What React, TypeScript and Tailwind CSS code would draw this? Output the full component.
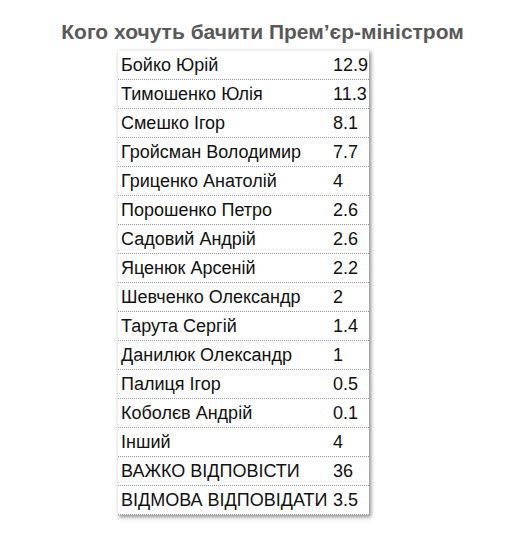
import React from "react";

const rows: [string, string][] = [
  ["Бойко Юрій", "12.9"],
  ["Тимошенко Юлія", "11.3"],
  ["Смешко Ігор", "8.1"],
  ["Гройсман Володимир", "7.7"],
  ["Гриценко Анатолій", "4"],
  ["Порошенко Петро", "2.6"],
  ["Садовий Андрій", "2.6"],
  ["Яценюк Арсеній", "2.2"],
  ["Шевченко Олександр", "2"],
  ["Тарута Сергій", "1.4"],
  ["Данилюк Олександр", "1"],
  ["Палиця Ігор", "0.5"],
  ["Коболєв Андрій", "0.1"],
  ["Інший", "4"],
  ["ВАЖКО ВІДПОВІСТИ", "36"],
  ["ВІДМОВА ВІДПОВІДАТИ", "3.5"],
];

export default function App() {
  return (
    <div className="w-[525px] h-[542px] bg-white" style={{ fontFamily: '"Liberation Sans", Arial, sans-serif' }}>
      <div className="pt-[19px] text-center text-[21px] font-bold text-[#595959] leading-[26px]">
        Кого хочуть бачити Прем’єр-міністром
      </div>
      <div className="pt-[5px]">
        <div className="ml-[117px] w-[252px] bg-white shadow-[2px_2px_4px_rgba(0,0,0,0.45)] border-t border-l border-[#eee]">
          {rows.map(([n, v]) => (
            <div key={n} className="flex h-[29px] items-center border-b border-dotted border-[#999] text-[18px] text-[#111]">
              <div className="w-[215px] pl-[3px] whitespace-nowrap">{n}</div>
              <div className="flex-1 whitespace-nowrap">{v}</div>
            </div>
          ))}
        </div>
      </div>
    </div>
  );
}
